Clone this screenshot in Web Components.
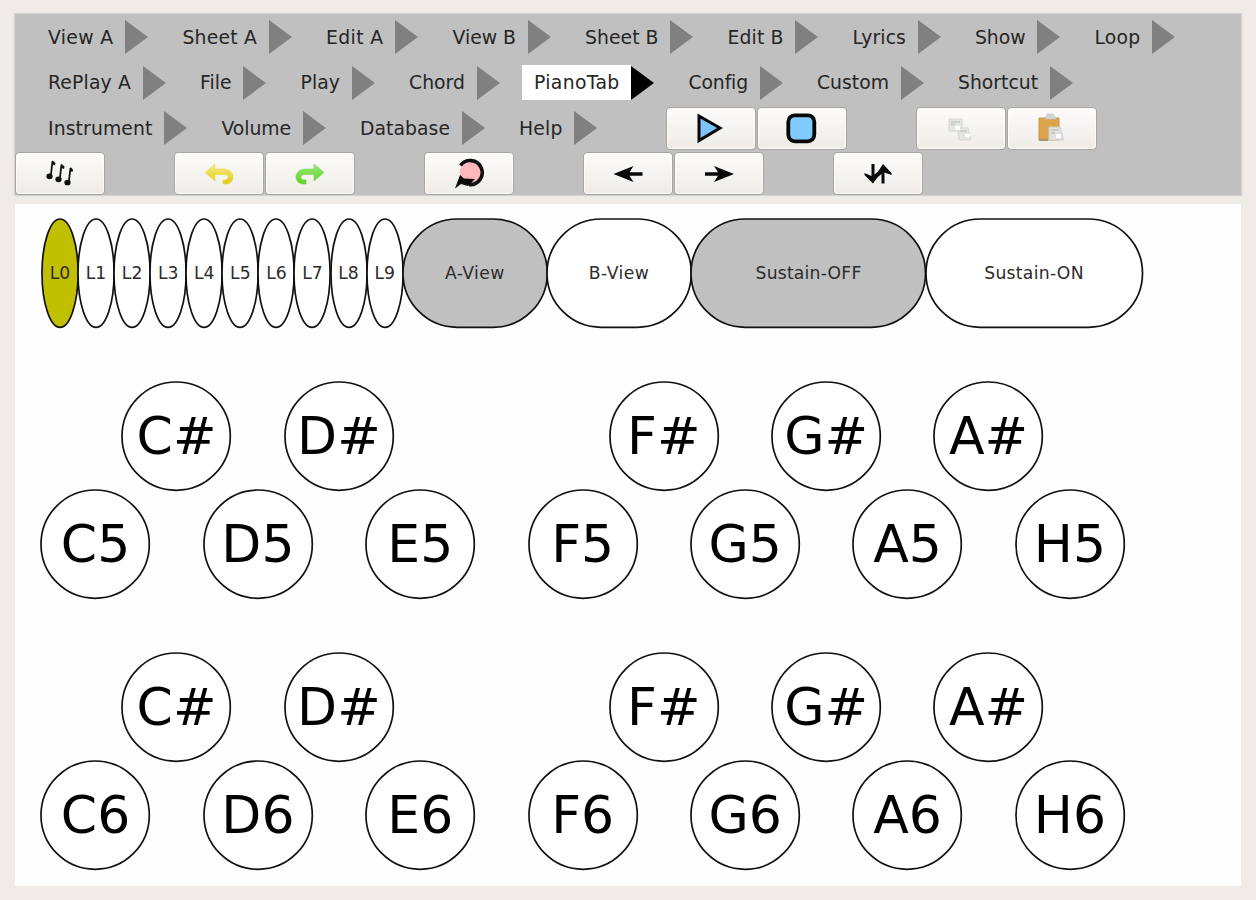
<!DOCTYPE html>
<html lang="en">
<head>
<meta charset="utf-8">
<title>PianoTab</title>
<style>
  body {
    margin: 0;
    height: 900px;
    overflow: hidden;
    background: #efece8;
    font-family: "DejaVu Sans", sans-serif;
  }
</style>
</head>
<body>
<piano-app></piano-app>

<script>
const icons = {
  notes: `<g fill="#111" stroke="#111" stroke-width="1.300">
    <path d="M9.500 4L7.800 19M18.500 7.500L16.800 22M27.500 11L25.800 25" fill="none" stroke-width="1.800"/>
    <path d="M9.500 3.500l3 2.500-.5 2.500-2.500-1zM18.500 7l3 2.500-.5 2.500-2.500-1zM27.500 10l2.500 2.500-.5 2.500-2.500-1z" stroke="none"/>
    <ellipse cx="6.500" cy="19.300" rx="2.500" ry="2.200"/><ellipse cx="15.500" cy="22.300" rx="2.500" ry="2.200"/><ellipse cx="24.500" cy="25.500" rx="2.500" ry="2.200"/></g>`,
  undo: `<defs><linearGradient id="g" x2="0" y2="1"><stop stop-color="#f8eb8a"/><stop offset="1" stop-color="#e2cb10"/></linearGradient></defs>
    <path d="M3 15.500L13 7v5h8c6 0 10 3 10 8 0 4-3 7-7 7h-3v-4c3 0 5-.5 5-3 0-1.500-1-2.500-3-2.500H13V24z" fill="url(#g)" stroke="#ead64a" stroke-width=".6"/>`,
  redo: `<defs><linearGradient id="g" x2="0" y2="1"><stop stop-color="#9be87c"/><stop offset="1" stop-color="#5ed321"/></linearGradient></defs>
    <path d="M31 15.500L21 7v5h-8c-6 0-10 3-10 8 0 4 3 7 7 7h3v-4c-3 0-5-.5-5-3 0-1.500 1-2.500 3-2.500h10V24z" fill="url(#g)" stroke="#74d94b" stroke-width=".6"/>`,
  loop: `<circle cx="18.500" cy="16" r="11" fill="#ffb9bd"/>
    <path d="M8.500 8.500A12 12 0 1 1 17 27.500" fill="none" stroke="#101010" stroke-width="3.600"/>
    <path d="M3 31.500L8 18l4 3.500 11 .5-7 7-7-2z" fill="#080808"/>`,
  left: `<path d="M2.500 17l20-8-4 6.200h13v3.600h-13l4 6.200z" fill="#080808"/>`,
  right: `<path d="M32 17l-20-8 4 6.200H3v3.600h13L12 25z" fill="#080808"/>`,
  swap: `<g fill="#080808"><path d="M10.500 7h3v10.500L20 12l1 2-9 12.500L3.500 18v-2l7 3z"/><path d="M20.500 26.500V17l-6 5-1-2L22 7l8.500 9v2l-7-2.500v11z"/></g>`,
  play: `<path d="M6 5v24.500L27 17z" fill="#7cc4f8" stroke="#080808" stroke-width="3"/>`,
  stop: `<rect x="4.300" y="4.300" width="26" height="26" rx="6.500" fill="#7fcbff" stroke="#080808" stroke-width="3.800"/>`,
  copy: `<g fill="#e3e5e1" stroke="#d4d7d2" stroke-width="1"><path d="M6 8h13v12H6z"/><path d="M15 17h10l3 12H16z"/></g>
    <path d="M8 11h9M8 13.500h4M17 20h7" stroke="#c3c8c2" stroke-width="1.500"/>
    <path d="M12 15h5v4h-5zM22 23h5v3h-5z" fill="#fff"/>`,
  paste: `<path d="M5 7h20v22H5z" fill="#dda44b" stroke="#cb9442"/>
    <path d="M11 8l2-5h6l3 5z" fill="#d3d7d3" stroke="#bfc3bf" stroke-width=".7"/>
    <path d="M15 16h11l3.500 13H15z" fill="#dfe2df" stroke="#ccd0cc"/>
    <path d="M17 19h7M17 22h4" stroke="#bfc5c1" stroke-width="1.500"/>
    <path d="M22 23h5v4h-5z" fill="#fff"/><path d="M5 29h9" stroke="#9c8d70" stroke-width="1.500"/>`,
};

// One line of text, spaced so that it fills the given width.
class FitText extends HTMLElement {
  constructor() {
    super();
    this.attachShadow({ mode: "open" }).innerHTML = `
      <style>
        :host { display: inline-block; white-space: nowrap; }
        span { display: inline-block; }
      </style>
      <span><slot></slot></span>
    `;
  }
  connectedCallback() {
    const width = Number(this.getAttribute("width"));
    if (!width) return;
    const span = this.shadowRoot.querySelector("span");
    const count = this.textContent.length;
    const spacing = (width - span.getBoundingClientRect().width) / count;
    span.style.letterSpacing = `${spacing}px`;
  }
}

class MenuEntry extends HTMLElement {
  connectedCallback() {
    const width = Number(this.getAttribute("width"));
    this.attachShadow({ mode: "open" }).innerHTML = `
      <style>
        :host { display: flex; align-items: center; flex: none; margin-right: 22.5px; }
        .label {
          box-sizing: border-box;
          width: ${width}px;
          height: 35px;
          padding-left: 12px;
          line-height: 36px;
          font-size: 18.8px;
          color: #262626;
        }
        svg { display: block; fill: #808080; }
        :host([selected]) .label { background: #fff; }
        :host([selected]) svg { fill: #000; }
      </style>
      <div class="label"><fit-text width="${width - 23.5}">${this.textContent}</fit-text></div>
      <svg width="23" height="34"><path d="M0 0L23 17L0 34z"/></svg>
    `;
  }
}

class ToolButton extends HTMLElement {
  connectedCallback() {
    this.attachShadow({ mode: "open" }).innerHTML = `
      <style>
        :host { display: block; flex: none; width: 91px; }
        :host([gap]) { margin-left: 68px; }
        button {
          display: flex;
          align-items: center;
          justify-content: center;
          box-sizing: border-box;
          width: 90px;
          height: 43px;
          padding: 0 1px 0 0;
          border: 1px solid #a9a6a2;
          border-radius: 4px;
          background: linear-gradient(#fdfcfb, #f6f4f1 50%, #efece7);
          box-shadow: inset 0 0 0 1px #fcfbf9;
        }
        svg { display: block; }
      </style>
      <button><svg width="34" height="34">${icons[this.getAttribute("icon")]}</svg></button>
    `;
  }
}

class MenuPanel extends HTMLElement {
  constructor() {
    super();
    this.attachShadow({ mode: "open" }).innerHTML = `
      <style>
        :host {
          display: grid;
          grid-template-rows: repeat(4, 45.500px);
          box-sizing: border-box;
          height: 181px;
          background: #c0c0c0;
          box-shadow: 0 0 1px 1px #d5d3d0;
        }
        div { display: flex; align-items: center; }
        .menus { padding-left: 21px; }
        .play { margin-left: 46px; }
      </style>
      <div class="menus">
        <menu-entry width="89">View A</menu-entry>
        <menu-entry width="98">Sheet A</menu-entry>
        <menu-entry width="81">Edit A</menu-entry>
        <menu-entry width="87">View B</menu-entry>
        <menu-entry width="97">Sheet B</menu-entry>
        <menu-entry width="79.5">Edit B</menu-entry>
        <menu-entry width="77">Lyrics</menu-entry>
        <menu-entry width="74">Show</menu-entry>
        <menu-entry width="69.5">Loop</menu-entry>
      </div>
      <div class="menus">
        <menu-entry width="106.5">RePlay A</menu-entry>
        <menu-entry width="55">File</menu-entry>
        <menu-entry width="63">Play</menu-entry>
        <menu-entry width="79.5">Chord</menu-entry>
        <menu-entry width="109" selected>PianoTab</menu-entry>
        <menu-entry width="83">Config</menu-entry>
        <menu-entry width="95.5">Custom</menu-entry>
        <menu-entry width="103.5">Shortcut</menu-entry>
      </div>
      <div class="menus">
        <menu-entry width="128">Instrument</menu-entry>
        <menu-entry width="93">Volume</menu-entry>
        <menu-entry width="113.5">Database</menu-entry>
        <menu-entry width="67">Help</menu-entry>
        <tool-button class="play" icon="play"></tool-button>
        <tool-button icon="stop"></tool-button>
        <tool-button gap icon="copy"></tool-button>
        <tool-button icon="paste"></tool-button>
      </div>
      <div>
        <tool-button icon="notes"></tool-button>
        <tool-button gap icon="undo"></tool-button>
        <tool-button icon="redo"></tool-button>
        <tool-button gap icon="loop"></tool-button>
        <tool-button gap icon="left"></tool-button>
        <tool-button icon="right"></tool-button>
        <tool-button gap icon="swap"></tool-button>
      </div>
    `;
  }
}

// An outlined round shape with its text in the middle.
class PianoKey extends HTMLElement {
  connectedCallback() {
    const width = Number(this.getAttribute("width") || 108.3);
    const fill = this.getAttribute("fill") || "#fff";
    const rx = Math.min(width / 2, 54.15);
    this.attachShadow({ mode: "open" }).innerHTML = `
      <style>
        :host {
          display: grid;
          place-items: center;
          flex: none;
          width: ${width}px;
          height: 108.300px;
        }
        svg, fit-text { grid-area: 1 / 1; }
        svg { display: block; overflow: visible; }
      </style>
      <svg width="${width}" height="108.300">
        <rect width="${width}" height="108.300" rx="${rx}" ry="54.150" fill="${fill}" stroke="#111" stroke-width="1.700"/>
      </svg>
      <fit-text width="${this.getAttribute("text") || ""}">${this.textContent}</fit-text>
    `;
  }
}

class PianoTab extends HTMLElement {
  constructor() {
    super();
    const layers = [..."0123456789"].map((n) => `
      <piano-key width="36.08" fill="${n === "0" ? "#c0c000" : "#fff"}">L${n}</piano-key>`);
    const octave = (n) => `
      <div class="sharps">
        ${["C", "D", "", "F", "G", "A"].map((k) => k ? `<piano-key>${k}#</piano-key>` : "<i></i>").join("")}
      </div>
      <div class="naturals">
        ${[..."CDEFGAH"].map((k) => `<piano-key>${k}${n}</piano-key>`).join("")}
      </div>`;
    this.attachShadow({ mode: "open" }).innerHTML = `
      <style>
        :host {
          display: block;
          box-sizing: border-box;
          height: 681.500px;
          padding: 14.900px 0 0 26.400px;
          background: #fefefe;
          color: #000;
        }
        div { display: flex; }
        .options { padding-left: .5px; font-size: 17.200px; color: #2c2c2c; margin-bottom: 54px; }
        .sharps, .naturals { gap: 54.100px; font-size: 52px; }
        .sharps { padding-left: 81px; }
        .naturals { margin-bottom: 54.400px; }
        i { width: 108.300px; }
      </style>
      <div class="options">
        ${layers.join("")}
        <piano-key width="144.3" text="59.5" fill="#c0c0c0">A-View</piano-key>
        <piano-key width="144.3" text="60.5">B-View</piano-key>
        <piano-key width="234.5" text="106" fill="#c0c0c0">Sustain-OFF</piano-key>
        <piano-key width="216.5" text="99.5">Sustain-ON</piano-key>
      </div>
      ${octave(5)}
      ${octave(6)}
    `;
  }
}

class PianoApp extends HTMLElement {
  constructor() {
    super();
    this.attachShadow({ mode: "open" }).innerHTML = `
      <style>
        :host { display: grid; gap: 9px; padding: 14.400px 15px; }
      </style>
      <menu-panel></menu-panel>
      <piano-tab></piano-tab>
    `;
  }
}

customElements.define("fit-text", FitText);
customElements.define("menu-entry", MenuEntry);
customElements.define("tool-button", ToolButton);
customElements.define("piano-key", PianoKey);
customElements.define("menu-panel", MenuPanel);
customElements.define("piano-tab", PianoTab);
customElements.define("piano-app", PianoApp);
</script>
</body>
</html>
